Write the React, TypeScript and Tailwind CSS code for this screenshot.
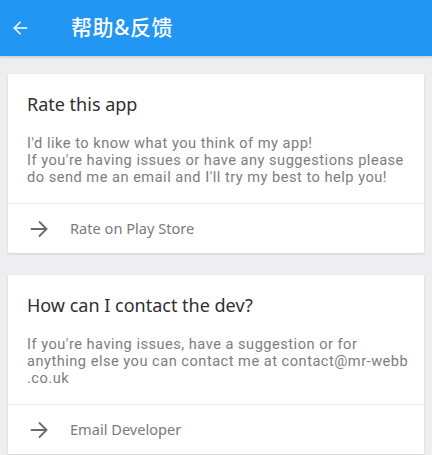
const font = { fontFamily: '"Noto Sans", "Noto Sans CJK SC", sans-serif' };
const bodyFont = { fontFamily: 'Roboto, "Noto Sans", sans-serif' };

const Arrow = ({ dir, className }: { dir: "left" | "right"; className?: string }) => (
  <svg viewBox="0 0 18 18" className={className} fill="none" stroke="currentColor" strokeWidth={1.8} strokeLinecap="round" strokeLinejoin="round">
    {dir === "right" ? (
      <>
        <path d="M1.5 9h15" />
        <path d="M9.5 2l7 7-7 7" />
      </>
    ) : (
      <>
        <path d="M16.5 9h-15" />
        <path d="M8.5 2l-7 7 7 7" />
      </>
    )}
  </svg>
);

interface CardProps {
  title: string;
  lines: string[];
  action: string;
}

const Card = ({ title, lines, action }: CardProps) => (
  <div className="bg-white shadow-[0_1px_2px_rgba(0,0,0,0.12)]">
    <div className="pt-[18px] pb-[17px] px-[19px]">
      <h2 className="text-[18px] leading-[24px] text-[#2f2f2f] whitespace-nowrap">{title}</h2>
      <p className="mt-[19px] text-[14.6px] leading-[17px] tracking-[0.5px] text-[#7d7d7d] whitespace-nowrap" style={bodyFont}>
        {lines.map((l, i) => (
          <span key={i} className="block">{l}</span>
        ))}
      </p>
    </div>
    <div className="h-px bg-[#ececec]" />
    <div className="h-[49px] flex items-center pl-[22px]">
      <Arrow dir="right" className="w-[18px] h-[18px] text-[#6b6b6b]" />
      <span className="ml-[22px] text-[14.6px] text-[#7a7a7a]">{action}</span>
    </div>
  </div>
);

export default function App() {
  return (
    <div className="w-[432px] h-[455px] overflow-hidden bg-[#eeeef0]" style={font}>
      <header className="h-14 bg-[#2196f3] flex items-center shadow-[0_1px_3px_rgba(0,0,0,0.18)] relative">
        <Arrow dir="left" className="ml-[13px] w-[15px] h-[16px] text-white" />
        <h1 className="ml-[43px] text-[21px] text-white font-medium tracking-[0.5px]">帮助&amp;反馈</h1>
      </header>
      <div className="px-2 pt-[18px] flex flex-col gap-[22px]">
        <Card
          title="Rate this app"
          lines={[
            "I'd like to know what you think of my app!",
            "If you're having issues or have any suggestions please",
            "do send me an email and I'll try my best to help you!",
          ]}
          action="Rate on Play Store"
        />
        <Card
          title="How can I contact the dev?"
          lines={[
            "If you're having issues, have a suggestion or for",
            "anything else you can contact me at contact@mr-webb",
            ".co.uk",
          ]}
          action="Email Developer"
        />
      </div>
    </div>
  );
}
